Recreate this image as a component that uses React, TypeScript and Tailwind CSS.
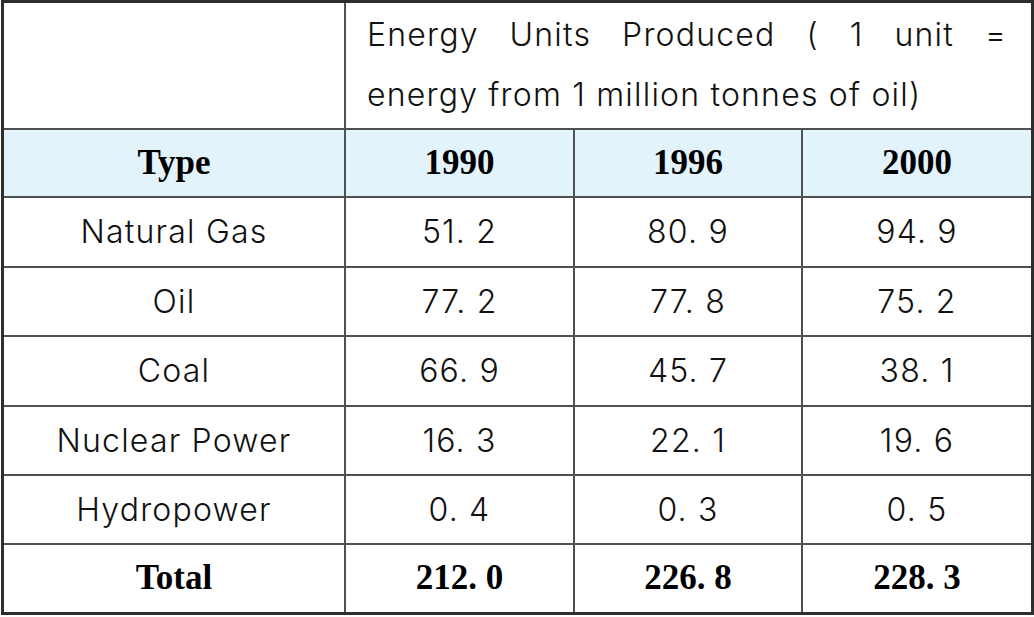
import React from "react";

const sans = "font-['Inter','Noto_Sans',sans-serif] font-light text-[32px] text-[#111]";
const serif = "font-['Liberation_Serif','Times_New_Roman',serif] font-bold text-[35px] text-black";

const rows: [string, string, string, string][] = [
  ["Natural Gas", "51. 2", "80. 9", "94. 9"],
  ["Oil", "77. 2", "77. 8", "75. 2"],
  ["Coal", "66. 9", "45. 7", "38. 1"],
  ["Nuclear Power", "16. 3", "22. 1", "19. 6"],
  ["Hydropower", "0. 4", "0. 3", "0. 5"],
];

function Cell({ children, bg = "bg-white" }: { children?: React.ReactNode; bg?: string }) {
  return <div className={`flex items-center justify-center ${bg}`}>{children}</div>;
}

export default function App() {
  return (
    <div className="w-[1034px] h-[617px] bg-white">
      <div className="ml-[1px] w-[1033px] h-[615px] border-[3px] border-[#2e2e2e] bg-[#505050]">
        <div className="grid h-full grid-cols-[340px_227px_226px_228px] grid-rows-[125px_66px_68px_67px_68px_67px_67px_67px] gap-[2px]">
          <Cell />
          <div className={`col-span-3 bg-white pl-[21px] pr-[24px] pt-[2px] leading-[60px] tracking-[1.2px] ${sans}`}>
            <div className="text-justify [text-align-last:justify]">Energy Units Produced ( 1 unit =</div>
            <div>energy from 1 million tonnes of oil)</div>
          </div>

          <Cell bg="bg-[#e2f3fb]">
            <span className={serif}>Type</span>
          </Cell>
          {["1990", "1996", "2000"].map((y) => (
            <Cell key={y} bg="bg-[#e2f3fb]">
              <span className={serif}>{y}</span>
            </Cell>
          ))}

          {rows.map((r) =>
            r.map((v, i) => (
              <Cell key={r[0] + i}>
                <span className={`${sans} tracking-[1.2px]`}>{v}</span>
              </Cell>
            ))
          )}

          <Cell>
            <span className={serif}>Total</span>
          </Cell>
          {["212. 0", "226. 8", "228. 3"].map((t) => (
            <Cell key={t}>
              <span className={serif}>{t}</span>
            </Cell>
          ))}
        </div>
      </div>
    </div>
  );
}
